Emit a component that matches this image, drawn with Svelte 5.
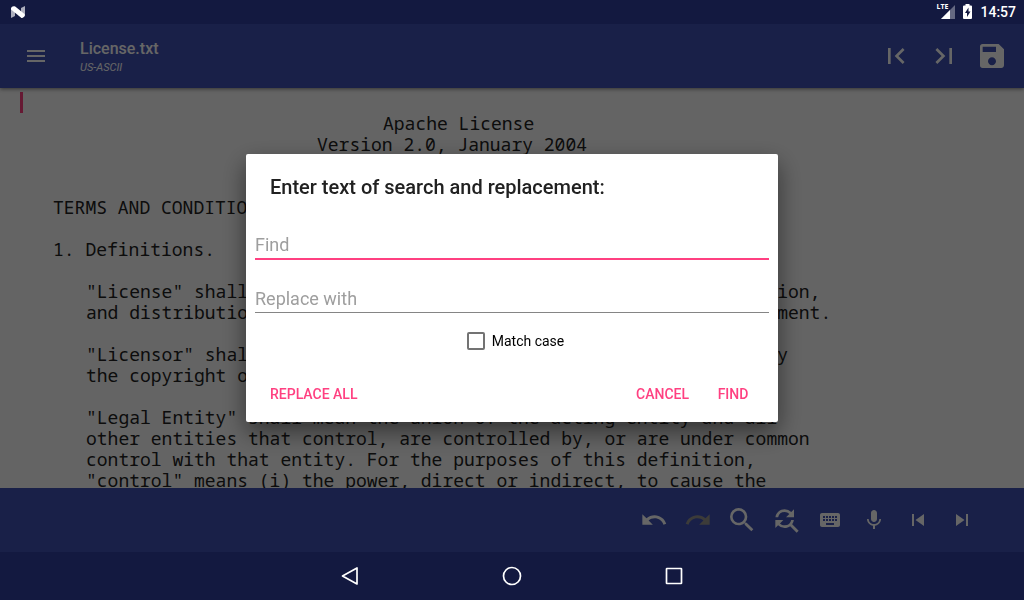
<script lang="ts">
  /**
   * Text editor screen with the find / replace dialog open.
   *
   * The editor, its toolbars and the system bars fill the window; the dialog
   * sits in a scrim that dims everything except the system bar icons.
   */
  type Action = { label: string; size: number; path: string; disabled?: boolean };

  const headerActions: Action[] = [
    { label: "Go to start", size: 32, path: "M18.41 16.59 13.82 12l4.59-4.59L17 6l-6 6 6 6zM6 6h2v12H6z" },
    { label: "Go to end", size: 32, path: "M5.59 7.41 10.18 12l-4.59 4.59L7 18l6-6-6-6zM16 6h2v12h-2z" },
    {
      label: "Save",
      size: 32,
      path: "M17 3H5a2 2 0 0 0-2 2v14a2 2 0 0 0 2 2h14c1.1 0 2-.9 2-2V7l-4-4zm-5 16c-1.66 0-3-1.34-3-3s1.34-3 3-3 3 1.34 3 3-1.34 3-3 3zm3-10H5V5h10v4z",
    },
  ];

  const editActions: Action[] = [
    {
      label: "Undo",
      size: 28,
      path: "M12.5 8c-2.65 0-5.05.99-6.9 2.6L2 7v9h9l-3.62-3.62c1.39-1.16 3.16-1.88 5.12-1.88 3.54 0 6.55 2.31 7.6 5.5l2.37-.78C21.08 11.03 17.15 8 12.5 8z",
    },
    {
      label: "Redo",
      size: 28,
      disabled: true,
      path: "M18.4 10.6C16.55 8.99 14.15 8 11.5 8c-4.65 0-8.58 3.03-9.96 7.22L3.9 16c1.05-3.19 4.05-5.5 7.6-5.5 1.95 0 3.73.72 5.12 1.88L13 16h9V7l-3.6 3.6z",
    },
    {
      label: "Search",
      size: 32,
      path: "M15.5 14h-.79l-.28-.27A6.47 6.47 0 0 0 16 9.5 6.5 6.5 0 1 0 9.5 16c1.61 0 3.09-.59 4.23-1.57l.27.28v.79l5 4.99L20.49 19l-4.99-5zm-6 0C7.01 14 5 11.99 5 9.5S7.01 5 9.5 5 14 7.01 14 9.5 11.99 14 9.5 14z",
    },
    {
      label: "Find and replace",
      size: 32,
      path: "M11 6c1.38 0 2.63.56 3.54 1.46L12 10h6V4l-2.05 2.05A6.976 6.976 0 0 0 11 4c-3.53 0-6.43 2.61-6.92 6H6.1A5 5 0 0 1 11 6zm5.64 9.14A6.89 6.89 0 0 0 17.92 12H15.9a5 5 0 0 1-4.9 4c-1.38 0-2.63-.56-3.54-1.46L10 12H4v6l2.05-2.05A6.976 6.976 0 0 0 11 18c1.55 0 2.98-.51 4.14-1.36L20 21.49 21.49 20l-4.85-4.86z",
    },
    {
      label: "Keyboard",
      size: 24,
      path: "M20 5H4c-1.1 0-1.99.9-1.99 2L2 17c0 1.1.9 2 2 2h16c1.1 0 2-.9 2-2V7c0-1.1-.9-2-2-2zm-9 3h2v2h-2V8zm0 3h2v2h-2v-2zM8 8h2v2H8V8zm0 3h2v2H8v-2zm-1 2H5v-2h2v2zm0-3H5V8h2v2zm9 7H8v-2h8v2zm0-4h-2v-2h2v2zm0-3h-2V8h2v2zm3 3h-2v-2h2v2zm0-3h-2V8h2v2z",
    },
    {
      label: "Voice input",
      size: 24,
      path: "M12 14c1.66 0 2.99-1.34 2.99-3L15 5c0-1.66-1.34-3-3-3S9 3.34 9 5v6c0 1.66 1.34 3 3 3zm5.3-3c0 3-2.54 5.1-5.3 5.1S6.7 14 6.7 11H5c0 3.41 2.72 6.23 6 6.72V21h2v-3.28c3.28-.48 6-3.3 6-6.72h-1.7z",
    },
    { label: "Previous", size: 24, path: "M6 6h2v12H6zm3.5 6 8.5 6V6z" },
    { label: "Next", size: 24, path: "M6 18l8.5-6L6 6v12zM16 6v12h2V6h-2z" },
  ];

  // [indent in columns, text]
  const license: [number, string][] = [
    [0, ""],
    [33, "Apache License"],
    [27, "Version 2.0, January 2004"],
    [24, "http://www.apache.org/licenses/"],
    [0, ""],
    [3, "TERMS AND CONDITIONS FOR USE, REPRODUCTION, AND DISTRIBUTION"],
    [0, ""],
    [3, "1. Definitions."],
    [0, ""],
    [6, '"License" shall mean the terms and conditions for use, reproduction,'],
    [6, "and distribution as defined by Sections 1 through 9 of this document."],
    [0, ""],
    [6, '"Licensor" shall mean the copyright owner or entity authorized by'],
    [6, "the copyright owner that is granting the License."],
    [0, ""],
    [6, '"Legal Entity" shall mean the union of the acting entity and all'],
    [6, "other entities that control, are controlled by, or are under common"],
    [6, "control with that entity. For the purposes of this definition,"],
    [6, '"control" means (i) the power, direct or indirect, to cause the'],
  ];
  const columnWidth = 11;

  let find = $state("");
  let replacement = $state("");
  let matchCase = $state(false);
</script>

{#snippet iconButton(action: Action)}
  <button class="icon-button" aria-label={action.label} disabled={action.disabled}>
    <svg viewBox="0 0 24 24" width={action.size} height={action.size} aria-hidden="true">
      <path d={action.path} />
    </svg>
  </button>
{/snippet}

<div class="screen">
  <div class="status">
    <svg class="status__logo" viewBox="0 0 14 12" width="14" height="12" aria-hidden="true">
      <path d="M0 2v10l4-2V2zM10 2l4-2v10l-4 2z" opacity=".65" />
      <path d="M0 2.2C.5.5 2.5-.3 4.2.6L13.5 8c.8 1.5-.7 4-3 4L0 3.5z" />
    </svg>
    <div class="status__signal">
      <span class="status__lte">LTE</span>
      <svg viewBox="0 0 14 14" width="14" height="14" aria-hidden="true">
        <path d="M14 0v14H0z" opacity=".35" />
        <path d="M9 5v9H0z" />
      </svg>
    </div>
    <svg class="status__battery" viewBox="0 0 9 15" width="9" height="15" aria-hidden="true">
      <path
        fill-rule="evenodd"
        d="M2.5 0h4v1.5H8a1 1 0 0 1 1 1V14a1 1 0 0 1-1 1H1a1 1 0 0 1-1-1V2.5a1 1 0 0 1 1-1h1.500zM5.500 3.500 2 9h2v4l3.500-5.500h-2z"
      />
    </svg>
    <time>14:57</time>
  </div>

  <header class="header">
    <button class="icon-button" aria-label="Menu">
      <svg viewBox="0 0 24 24" width="24" height="24" aria-hidden="true">
        <path d="M3 18h18v-2H3v2zm0-5h18v-2H3v2zm0-7v2h18V6H3z" />
      </svg>
    </button>
    <div class="header__title">
      <h1>License.txt</h1>
      <p>US-ASCII</p>
    </div>
    {#each headerActions as action (action.label)}
      {@render iconButton(action)}
    {/each}
  </header>

  <main class="editor">
    <span class="editor__caret"></span>
    <div class="editor__text">
      {#each license as [indent, text], i (i)}
        <p style:padding-left="{indent * columnWidth}px">{text}</p>
      {/each}
    </div>
  </main>

  <footer class="tools">
    {#each editActions as action (action.label)}
      {@render iconButton(action)}
    {/each}
  </footer>

  <nav class="navigation">
    <button aria-label="Back">
      <svg viewBox="0 0 24 24" width="24" height="24" aria-hidden="true"><path d="M19 4v16L4.500 12z" /></svg>
    </button>
    <button aria-label="Home">
      <svg viewBox="0 0 24 24" width="24" height="24" aria-hidden="true"><circle cx="12" cy="12" r="8.500" /></svg>
    </button>
    <button aria-label="Recent apps">
      <svg viewBox="0 0 24 24" width="24" height="24" aria-hidden="true">
        <rect x="4.500" y="4.500" width="15" height="15" rx=".5" />
      </svg>
    </button>
  </nav>

  <div class="scrim">
    <form class="dialog" role="dialog" aria-labelledby="dialog-title" onsubmit={(e) => e.preventDefault()}>
      <h2 id="dialog-title">Enter text of search and replacement:</h2>
      <input class="field field--active" type="text" placeholder="Find" aria-label="Find" bind:value={find} />
      <input class="field" type="text" placeholder="Replace with" aria-label="Replace with" bind:value={replacement} />
      <label class="match">
        <input type="checkbox" bind:checked={matchCase} />
        Match case
      </label>
      <div class="actions">
        <button type="button" class="actions__all">REPLACE ALL</button>
        <button type="button">CANCEL</button>
        <button type="submit">FIND</button>
      </div>
    </form>
  </div>
</div>

<style>
  :global(body) {
    margin: 0;
  }
  .screen {
    display: flex;
    flex-direction: column;
    height: 100vh;
    overflow: hidden;
    font-family: Roboto, sans-serif;
    background: #fafafa;
  }
  h1,
  h2,
  p {
    margin: 0;
  }
  button {
    padding: 0;
    font: inherit;
    color: inherit;
    background: none;
    border: 0;
  }
  svg {
    display: block;
    fill: currentColor;
  }

  .status {
    display: flex;
    flex: none;
    align-items: center;
    height: 24px;
    padding: 0 8px 0 11px;
    color: #fff;
    background: #131940;
    z-index: 2;
  }
  .status__logo {
    margin-right: auto;
  }
  .status__signal {
    display: flex;
    align-items: flex-end;
    height: 16px;
    margin-bottom: 2px;
  }
  .status__lte {
    align-self: flex-start;
    width: 5px;
    font: 700 7px/8px "Open Sans", sans-serif;
    white-space: nowrap;
  }
  .status__battery {
    margin: 0 8px 2px;
  }
  .status time {
    font-size: 14px;
    font-weight: 500;
    line-height: 24px;
  }

  .header,
  .tools {
    display: flex;
    flex: none;
    align-items: center;
    height: 64px;
    color: #fff;
    background: #3f51b5;
  }
  .header {
    padding: 0 8px 0 12px;
    box-shadow: 0 1px 4px rgba(0, 0, 0, 0.5);
    z-index: 1;
  }
  .header__title {
    flex: 1;
    padding: 4px 0 0 20px;
  }
  .header h1 {
    font-size: 16px;
    font-weight: 500;
    line-height: 20px;
  }
  .header p {
    font-size: 11px;
    font-style: italic;
    line-height: 18px;
  }
  .icon-button {
    display: grid;
    place-items: center;
    width: 48px;
    height: 48px;
  }
  .icon-button:disabled {
    color: #969490;
  }
  .tools {
    justify-content: flex-end;
    padding-right: 40px;
  }
  .tools .icon-button {
    width: 44px;
  }

  .editor {
    display: flex;
    flex: 1;
    min-height: 0;
    padding: 4px 20px 0;
    overflow: hidden;
  }
  .editor__caret {
    flex: none;
    width: 3px;
    height: 21px;
    margin-right: -3px;
    background: #ff4081;
  }
  .editor__text {
    font: 18px/21px "Droid Sans Mono", "Noto Sans Mono", "DejaVu Sans Mono", monospace;
    color: #212121;
  }
  .editor__text p {
    min-height: 21px;
    white-space: pre;
  }

  .navigation {
    display: flex;
    flex: none;
    justify-content: center;
    height: 48px;
    color: #fff;
    background: #131940;
    z-index: 2;
  }
  .navigation button {
    display: grid;
    place-items: center;
    width: 162px;
  }
  .navigation svg {
    fill: none;
    stroke: currentColor;
    stroke-width: 1.7;
    stroke-linejoin: round;
  }

  .scrim {
    position: fixed;
    inset: 24px 0 48px;
    display: grid;
    place-items: center;
    background: rgba(0, 0, 0, 0.6);
    z-index: 1;
  }
  .dialog {
    box-sizing: border-box;
    display: flex;
    flex-direction: column;
    width: min(532px, 90vw);
    padding: 21px 9px 10px;
    background: #fff;
    border-radius: 2px;
    box-shadow: 0 10px 24px rgba(0, 0, 0, 0.5);
  }
  .dialog h2 {
    margin: 0 15px 32px;
    font-size: 20px;
    font-weight: 500;
    line-height: 24px;
    color: #212121;
  }
  .field {
    height: 27px;
    padding: 0;
    margin-bottom: 18px;
    font: 18px/27px Roboto, sans-serif;
    color: #212121;
    background: none;
    border: 0;
    border-bottom: 1px solid #858585;
    outline: 0;
  }
  .field--active {
    margin-bottom: 25px;
    border-bottom: 2px solid #ff4081;
  }
  .field::placeholder {
    color: #9e9e9e;
    opacity: 1;
  }
  .match {
    display: flex;
    align-items: center;
    align-self: center;
    margin-bottom: 25px;
    font-size: 14px;
    line-height: 20px;
    color: #000;
  }
  .match input {
    appearance: none;
    box-sizing: border-box;
    width: 18px;
    height: 18px;
    margin: 0 7px;
    border: 2px solid #737373;
    border-radius: 2px;
  }
  .match input:checked {
    background: #ff4081;
    border-color: #ff4081;
  }
  .actions {
    display: flex;
    gap: 4px;
    padding: 0 4px 0 7px;
    font-size: 14px;
    font-weight: 500;
    color: #ff4081;
  }
  .actions button {
    min-width: 64px;
    height: 36px;
    padding: 0 8px;
  }
  .actions .actions__all {
    margin-right: auto;
  }
</style>
